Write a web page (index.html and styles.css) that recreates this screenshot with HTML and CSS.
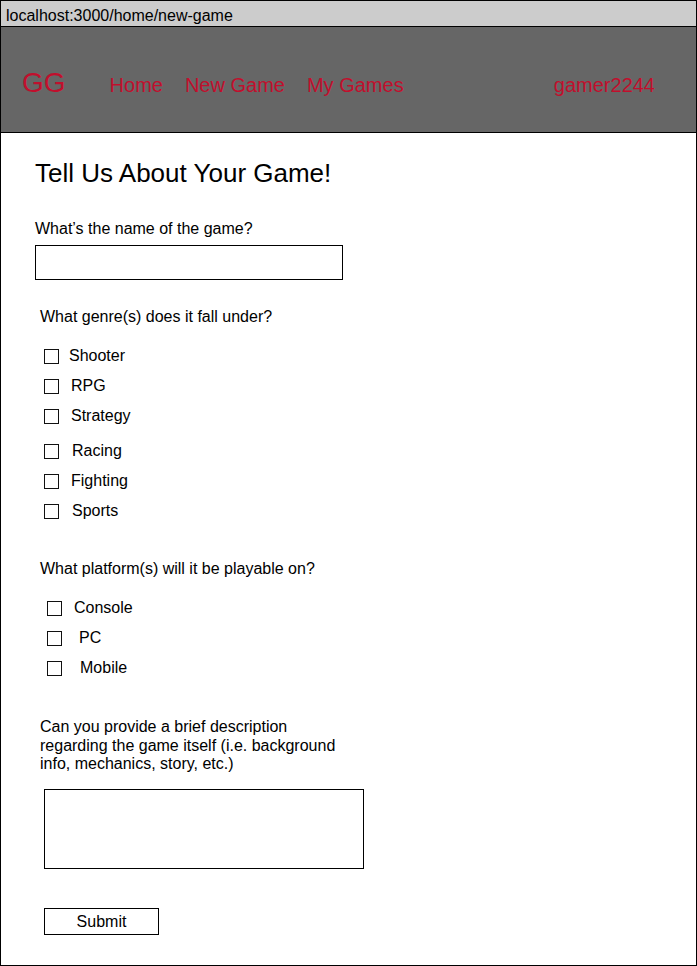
FILE: index.html
```html
<!DOCTYPE html>
<html lang="en">
<head>
<meta charset="utf-8">
<title>New Game</title>
<link rel="stylesheet" href="styles.css">
</head>
<body>
<div class="frame">
  <div class="urlbar">localhost:3000/home/new-game</div>
  <header class="topnav">
    <span class="logo">GG</span>
    <nav class="links">
      <a href="#">Home</a>
      <a href="#">New Game</a>
      <a href="#">My Games</a>
    </nav>
    <a class="user" href="#">gamer2244</a>
  </header>
  <main class="content">
    <h1 class="title">Tell Us About Your Game!</h1>

    <label class="question" for="name">What’s the name of the game?</label>
    <input class="textbox" id="name" type="text">

    <section class="group genres">
      <p class="question">What genre(s) does it fall under?</p>
      <label class="opt"><input type="checkbox"><span>Shooter</span></label>
      <label class="opt pad2"><input type="checkbox"><span>RPG</span></label>
      <label class="opt pad2"><input type="checkbox"><span>Strategy</span></label>
      <label class="opt pad3 gap-top"><input type="checkbox"><span>Racing</span></label>
      <label class="opt pad2"><input type="checkbox"><span>Fighting</span></label>
      <label class="opt pad3"><input type="checkbox"><span>Sports</span></label>
    </section>

    <section class="group platforms">
      <p class="question">What platform(s) will it be playable on?</p>
      <label class="opt"><input type="checkbox"><span>Console</span></label>
      <label class="opt pad5"><input type="checkbox"><span>PC</span></label>
      <label class="opt pad6"><input type="checkbox"><span>Mobile</span></label>
    </section>

    <section class="group description">
      <label class="question desc-q" for="desc">Can you provide a brief description regarding the game itself (i.e. background info, mechanics, story, etc.)</label>
      <textarea class="descbox" id="desc"></textarea>
      <button class="submit" type="submit">Submit</button>
    </section>
  </main>
</div>
</body>
</html>
```

FILE: styles.css
```css
* {
  box-sizing: border-box;
}

html, body {
  margin: 0;
  padding: 0;
  background: #fff;
}

body {
  font-family: "Liberation Sans", Arial, Helvetica, sans-serif;
  color: #000;
}

.frame {
  width: 697px;
  height: 966px;
  border: 1px solid #000;
  overflow: hidden;
}

.urlbar {
  height: 26px;
  padding: 4px 5px 0;
  background: #cccccc;
  border-bottom: 1px solid #000;
  font-size: 16px;
  line-height: 21px;
  color: #000;
}

.topnav {
  height: 106px;
  display: flex;
  align-items: baseline;
  padding: 42px 41px 0 21px;
  background: #666666;
  border-bottom: 1px solid #000;
}

.logo {
  font-size: 28px;
  line-height: 1;
  color: #c10f2d;
  margin-right: 44px;
}

.links {
  display: flex;
  align-items: baseline;
  gap: 22px;
}

.links a,
.user {
  font-size: 20px;
  line-height: 1;
  color: #c10f2d;
  text-decoration: none;
}

.user {
  margin-left: auto;
}

.content {
  padding: 25px 0 0 34px;
}

.title {
  margin: 0;
  font-size: 26px;
  line-height: 30px;
  font-weight: normal;
}

.question {
  display: block;
  margin: 0;
  font-size: 16px;
  line-height: 18px;
}

.content > .question {
  margin-top: 32px;
}

.textbox {
  display: block;
  margin: 7px 0 0;
  width: 308px;
  height: 35px;
  border: 1px solid #000;
  border-radius: 0;
  padding: 0 6px;
  font: 16px "Liberation Sans", Arial, sans-serif;
  outline: none;
}

.group {
  padding-left: 5px;
}

.genres {
  margin-top: 28px;
}

.genres .question {
  margin-bottom: 15px;
}

.opt {
  display: flex;
  align-items: center;
  height: 30px;
  font-size: 16px;
  line-height: 18px;
  gap: 10px;
}

.opt input {
  appearance: none;
  -webkit-appearance: none;
  width: 15px;
  height: 15px;
  margin: 0 0 0 4px;
  border: 1px solid #111;
  border-radius: 0;
  background: #fff;
  flex: none;
}

.opt.pad2 span { padding-left: 2px; }
.opt.pad3 span { padding-left: 3px; }
.opt.pad5 span { padding-left: 5px; }
.opt.pad6 span { padding-left: 6px; }

.opt.gap-top {
  margin-top: 5px;
}

.platforms {
  margin-top: 34px;
}

.platforms .question {
  margin-bottom: 15px;
}

.platforms .opt input {
  margin-left: 7px;
}

.platforms .opt {
  gap: 12px;
}

.description {
  margin-top: 35px;
}

.desc-q {
  width: 305px;
  line-height: 18.5px;
}

.descbox {
  display: block;
  margin: 15px 0 0 4px;
  width: 320px;
  height: 80px;
  border: 1px solid #000;
  border-radius: 0;
  resize: none;
  outline: none;
  font: 16px "Liberation Sans", Arial, sans-serif;
}

.submit {
  display: block;
  margin: 39px 0 0 4px;
  width: 115px;
  height: 27px;
  padding: 0;
  border: 1px solid #000;
  border-radius: 0;
  background: #fff;
  color: #000;
  font: 16px "Liberation Sans", Arial, sans-serif;
  line-height: 25px;
  text-align: center;
}
```
